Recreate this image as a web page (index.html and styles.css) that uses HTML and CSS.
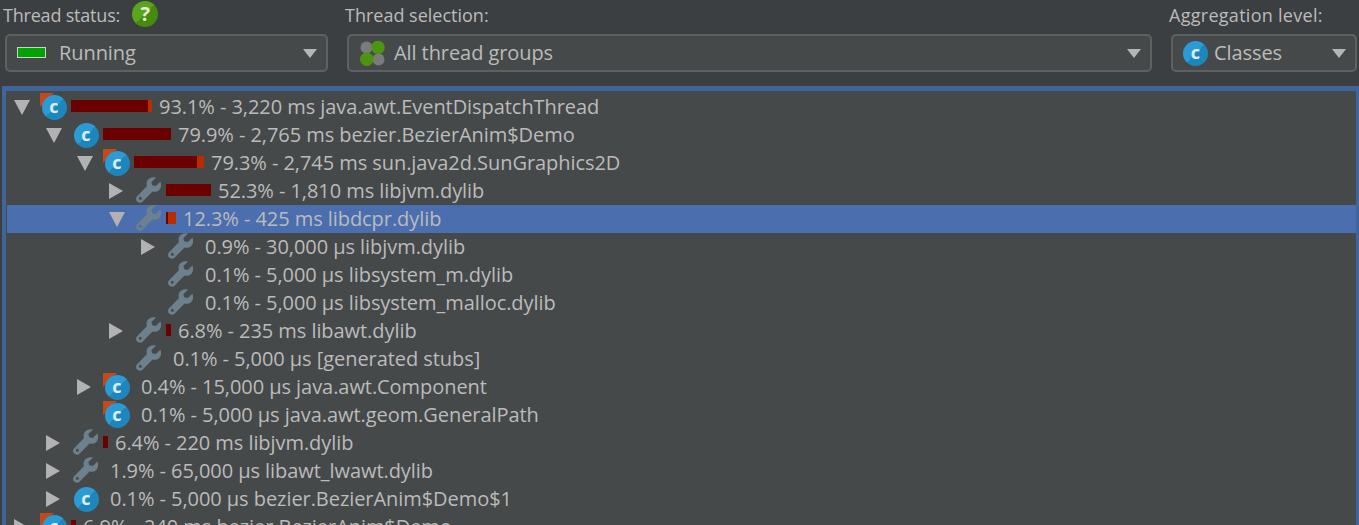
FILE: index.html
```html
<!DOCTYPE html>
<html lang="en">
<head>
<meta charset="utf-8">
<title>Thread call tree</title>
<link rel="stylesheet" href="styles.css">
</head>
<body>
<svg class="defs" width="0" height="0" aria-hidden="true">
  <symbol id="wrench" viewBox="0 0 28 28">
    <path fill-rule="evenodd" d="M25.500 4.500l-4.800 4.600-3.400-.9-.9-3.300 4.700-4.400c-3.700-.9-7.600.3-9 3.500-.7 1.700-.7 3.400-.1 4.900L2.600 18.800c-2 1.800-2.100 4.300-.5 5.800 1.700 1.700 4.200 1.500 5.900-.4l9.500-9.700c1.600.5 3.300.4 5-.3 3.200-1.500 4.400-5.500 3-9.700zM5.300 19.800a1.500 1.500 0 1 1 0 3 1.500 1.500 0 0 1 0-3z" fill="currentColor"/>
  </symbol>
</svg>

<header class="filters">
  <div class="filter filter-status">
    <div class="filter-label">Thread status:<span class="help">?</span></div>
    <div class="combo"><span class="swatch"></span><span class="combo-text">Running</span><span class="combo-arrow"></span></div>
  </div>
  <div class="filter filter-selection">
    <div class="filter-label">Thread selection:</div>
    <div class="combo combo-groups">
      <svg class="groups" width="25" height="25" viewBox="0 0 25 25" aria-hidden="true">
        <circle cx="6.500" cy="6.500" r="6" fill="#7a7c7c"/>
        <circle cx="18.500" cy="18.500" r="6" fill="#7a7c7c"/>
        <circle cx="18" cy="6.500" r="6.800" fill="#4b9510"/>
        <circle cx="6.800" cy="18.200" r="6.800" fill="#4b9510"/>
      </svg>
      <span class="combo-text">All thread groups</span><span class="combo-arrow"></span>
    </div>
  </div>
  <div class="filter filter-level">
    <div class="filter-label">Aggregation level:</div>
    <div class="combo combo-level"><span class="cls">c</span><span class="combo-text">Classes</span><span class="combo-arrow"></span></div>
  </div>
</header>

<main class="tree">
  <div class="row d0"><span class="tw open"></span><span class="node flagged"><span class="cls">c</span></span><span class="bar" style="width:81px"><i style="width:4px"></i></span><span class="label">93.1% - 3,220 ms java.awt.EventDispatchThread</span></div>
  <div class="row d1"><span class="tw open"></span><span class="node"><span class="cls">c</span></span><span class="bar" style="width:68px"></span><span class="label">79.9% - 2,765 ms bezier.BezierAnim$Demo</span></div>
  <div class="row d2"><span class="tw open"></span><span class="node flagged"><span class="cls">c</span></span><span class="bar" style="width:70px"><i style="width:7px"></i></span><span class="label">79.3% - 2,745 ms sun.java2d.SunGraphics2D</span></div>
  <div class="row d3"><span class="tw shut"></span><span class="node"><svg class="wr"><use href="#wrench"/></svg></span><span class="bar" style="width:45px"></span><span class="label">52.3% - 1,810 ms libjvm.dylib</span></div>
  <div class="row d3 selected"><span class="tw open"></span><span class="node"><svg class="wr"><use href="#wrench"/></svg></span><span class="bar" style="width:10px"><i style="width:8px"></i></span><span class="label">12.3% - 425 ms libdcpr.dylib</span></div>
  <div class="row d4"><span class="tw shut"></span><span class="node"><svg class="wr"><use href="#wrench"/></svg></span><span class="bar" style="width:0"></span><span class="label">0.9% - 30,000 µs libjvm.dylib</span></div>
  <div class="row d4"><span class="tw"></span><span class="node"><svg class="wr"><use href="#wrench"/></svg></span><span class="bar" style="width:0"></span><span class="label">0.1% - 5,000 µs libsystem_m.dylib</span></div>
  <div class="row d4"><span class="tw"></span><span class="node"><svg class="wr"><use href="#wrench"/></svg></span><span class="bar" style="width:0"></span><span class="label">0.1% - 5,000 µs libsystem_malloc.dylib</span></div>
  <div class="row d3"><span class="tw shut"></span><span class="node"><svg class="wr"><use href="#wrench"/></svg></span><span class="bar" style="width:5px"></span><span class="label">6.8% - 235 ms libawt.dylib</span></div>
  <div class="row d3"><span class="tw"></span><span class="node"><svg class="wr"><use href="#wrench"/></svg></span><span class="bar" style="width:0"></span><span class="label">0.1% - 5,000 µs [generated stubs]</span></div>
  <div class="row d2"><span class="tw shut"></span><span class="node flagged"><span class="cls">c</span></span><span class="bar" style="width:0"></span><span class="label">0.4% - 15,000 µs java.awt.Component</span></div>
  <div class="row d2"><span class="tw"></span><span class="node flagged"><span class="cls">c</span></span><span class="bar" style="width:0"></span><span class="label">0.1% - 5,000 µs java.awt.geom.GeneralPath</span></div>
  <div class="row d1"><span class="tw shut"></span><span class="node"><svg class="wr"><use href="#wrench"/></svg></span><span class="bar" style="width:5px"></span><span class="label">6.4% - 220 ms libjvm.dylib</span></div>
  <div class="row d1"><span class="tw shut"></span><span class="node"><svg class="wr"><use href="#wrench"/></svg></span><span class="bar" style="width:0"></span><span class="label">1.9% - 65,000 µs libawt_lwawt.dylib</span></div>
  <div class="row d1"><span class="tw shut"></span><span class="node"><span class="cls">c</span></span><span class="bar" style="width:0"></span><span class="label">0.1% - 5,000 µs bezier.BezierAnim$Demo$1</span></div>
  <div class="row d0"><span class="tw shut"></span><span class="node flagged"><span class="cls">c</span></span><span class="bar" style="width:5px"></span><span class="label">6.9% - 240 ms bezier.BezierAnim$Demo</span></div>
</main>
</body>
</html>
```
FILE: styles.css
```css
* { box-sizing: border-box; }
html, body { margin: 0; height: 525px; overflow: hidden; }
body {
  background: #3c3f41;
  color: #bbbbbb;
  font-family: "Open Sans", "Noto Sans", sans-serif;
  font-size: 20px;
  position: relative;
}
.defs { position: absolute; }

.filters { display: flex; height: 86px; padding: 0 2px 0 3px; gap: 17px; }
.filter { display: flex; flex-direction: column; }
.filter-status { width: 325px; }
.filter-selection { flex: 1; }
.filter-level { width: 188px; }
.filter-label {
  height: 34px; display: flex; align-items: center; gap: 12px;
  padding-bottom: 4px;
  font-size: 18px; white-space: nowrap;
}
.filter-status .filter-label { letter-spacing: -0.2px; }
.filter-level .filter-label { letter-spacing: 0.28px; }
.help {
  width: 26px; height: 26px; border-radius: 50%; margin-bottom: 2px;
  background: linear-gradient(135deg, #5aa51c 50%, #468a0e 50%);
  color: #e4ecd8; font-weight: 700; font-size: 20px; line-height: 26px; text-align: center;
}
.combo {
  height: 38px; margin-left: 2px; border: 2px solid #5e6162; border-radius: 5px;
  background: #45494a; display: flex; align-items: center;
  padding: 0 9px 0 10px;
}
.combo-text { flex: 1; white-space: nowrap; padding-bottom: 2px; letter-spacing: -0.08px; }
.combo-arrow {
  width: 0; height: 0;
  border-left: 7.500px solid transparent; border-right: 7.500px solid transparent;
  border-top: 9px solid #b5b5b5;
}
.swatch { width: 29px; height: 11px; margin: 0 13px 1px 0; background: #00a400; border: 1px solid #c9d2c9; }
.combo-groups { padding-left: 11px; }
.groups { margin-right: 9px; }
.combo-level .cls { margin-right: 6px; }

.tree {
  height: 439px; margin-left: 2px; overflow: hidden;
  background: #45494a;
  border: 4px solid #3f659a; border-top-width: 5px; border-bottom: 0; border-right-width: 3px;
  padding: 2px 0 0 1px;
}
.row { display: flex; align-items: center; height: 28px; white-space: nowrap; }
.d0 { padding-left: 7px; }
.d1 { padding-left: 39px; }
.d2 { padding-left: 70px; }
.d3 { padding-left: 102px; }
.d4 { padding-left: 134px; }
.selected { background: #4b6eaf; }
.label { padding-bottom: 2px; letter-spacing: -0.06px; }

.tw { width: 16px; height: 16px; flex: none; margin-right: 10px; }
.tw.open { width: 0; height: 0; border-left: 8px solid transparent; border-right: 8px solid transparent; border-top: 15px solid #b2b2b2; }
.tw.shut { width: 0; height: 0; border-top: 8px solid transparent; border-bottom: 8px solid transparent; border-left: 14px solid #b2b2b2; margin-right: 12px; }

.node { position: relative; width: 28px; height: 28px; flex: none; display: flex; align-items: center; justify-content: center; margin-right: 3px; }
.flagged::before { content: ""; position: absolute; left: 0; top: 0; width: 14px; height: 14px; background: #c04a1c; clip-path: polygon(0 0, 100% 0, 0 100%); }
.cls {
  position: relative; width: 25px; height: 25px; flex: none; border-radius: 50%;
  background: linear-gradient(135deg, #2b9bd6 50%, #1d86bd 50%);
  color: #dfeef6; font-weight: 700; font-size: 18px; line-height: 22px; text-align: center;
}
.wr { width: 28px; height: 28px; color: #6c808d; }
.bar { display: flex; justify-content: flex-end; height: 12px; margin-bottom: 2px; background: #6b0000; flex: none; margin-right: 7px; }
.bar i { display: block; height: 100%; background: #b82c00; }
```
